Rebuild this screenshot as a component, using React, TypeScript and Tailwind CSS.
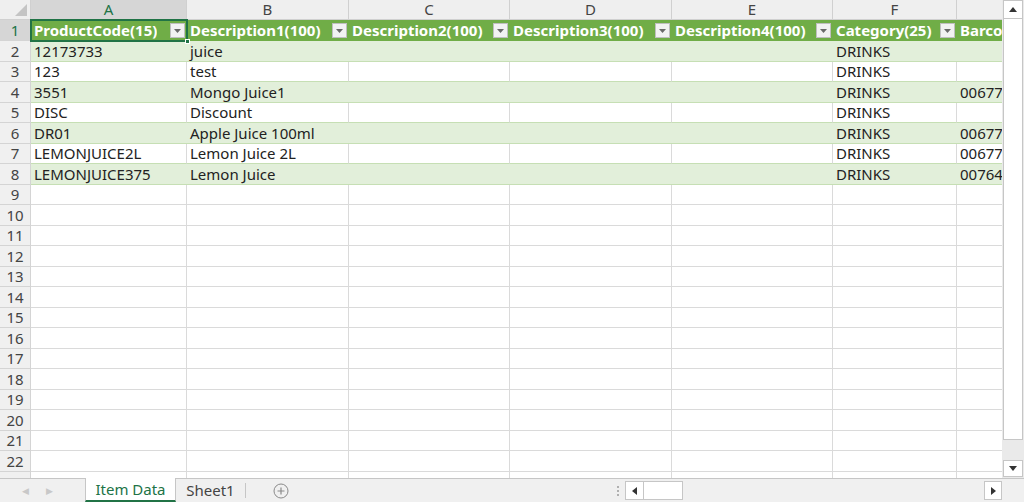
import React from "react";

const COLS = [
  { key: "A", w: 156 },
  { key: "B", w: 162 },
  { key: "C", w: 161 },
  { key: "D", w: 162 },
  { key: "E", w: 161 },
  { key: "F", w: 124 },
  { key: "G", w: 120 },
];

const HEAD = [
  "ProductCode(15)",
  "Description1(100)",
  "Description2(100)",
  "Description3(100)",
  "Description4(100)",
  "Category(25)",
  "Barcode(50)",
];

const DATA = [
  ["12173733", "juice", "", "", "", "DRINKS", ""],
  ["123", "test", "", "", "", "DRINKS", ""],
  ["3551", "Mongo Juice1", "", "", "", "DRINKS", "0067700012"],
  ["DISC", "Discount", "", "", "", "DRINKS", ""],
  ["DR01", "Apple Juice 100ml", "", "", "", "DRINKS", "0067700034"],
  ["LEMONJUICE2L", "Lemon Juice 2L", "", "", "", "DRINKS", "0067700056"],
  ["LEMONJUICE375", "Lemon Juice", "", "", "", "DRINKS", "0076400078"],
];

const font = "font-['Noto_Sans','Liberation_Sans',sans-serif]";

function FilterBtn() {
  return (
    <span className="ml-auto mr-[2px] flex h-[15px] w-[15px] shrink-0 items-center justify-center border border-[#bfbfbf] bg-[#f2f2f2]">
      <svg width="7" height="4" viewBox="0 0 7 4">
        <path d="M0 0h7L3.5 4z" fill="#6a6a6a" />
      </svg>
    </span>
  );
}

function RowHead({ n, sel }: { n: number; sel?: boolean }) {
  return (
    <div
      className={`flex w-[31px] shrink-0 items-center justify-center border-r border-b border-[#d4d4d4] text-[15px] ${
        sel ? "bg-[#d6d6d6] text-[#217346]" : "bg-[#f0f0f0] text-[#444]"
      }`}
    >
      {n}
    </div>
  );
}

export default function App() {
  const empty = Array.from({ length: 14 }, (_, i) => i + 9);
  return (
    <div className={`flex h-[502px] w-[1024px] flex-col overflow-hidden bg-white ${font}`}>
      <div className="flex h-[478px]">
        {/* sheet */}
        <div className="flex w-[1002px] flex-col overflow-hidden">
          {/* column letters */}
          <div className="flex h-[20px] shrink-0">
            <div className="relative w-[31px] shrink-0 border-r border-b border-[#d0d0d0] bg-[#efefef]">
              <svg className="absolute right-[3px] bottom-[3px]" width="12" height="12" viewBox="0 0 12 12">
                <path d="M12 0V12H0z" fill="#c4c4c4" />
              </svg>
            </div>
            {COLS.map((c, i) => (
              <div
                key={c.key}
                style={{ width: c.w }}
                className={`flex shrink-0 items-center justify-center border-r border-b text-[15px] ${
                  i === 0
                    ? "border-[#d0d0d0] border-b-[#217346] bg-[#d6d6d6] text-[#217346]"
                    : "border-[#d0d0d0] bg-[#efefef] text-[#444]"
                }`}
              >
                {c.key}
              </div>
            ))}
          </div>

          {/* header row */}
          <div className="flex h-[21px] shrink-0">
            <RowHead n={1} sel />
            {COLS.map((c, i) => (
              <div
                key={c.key}
                style={{ width: c.w }}
                className={`relative flex shrink-0 items-center overflow-visible bg-[#70ad47] pl-[3px] text-[15px] font-bold whitespace-nowrap text-white ${
                  i === 0 ? "z-10 outline-2 -outline-offset-1 outline-[#217346]" : ""
                }`}
              >
                <span className="overflow-hidden">{HEAD[i]}</span>
                {i < 6 && <FilterBtn />}
                {i === 0 && (
                  <span className="absolute right-[-3px] bottom-[-3px] h-[5px] w-[5px] border border-white bg-[#217346]" />
                )}
              </div>
            ))}
          </div>

          {/* data rows */}
          {DATA.map((r, ri) => {
            const band = ri % 2 === 0;
            return (
              <div key={ri} className="flex h-[20.5px] shrink-0">
                <RowHead n={ri + 2} />
                {COLS.map((c, ci) => (
                  <div
                    key={c.key}
                    style={{ width: c.w }}
                    className={`flex shrink-0 items-center overflow-hidden border-b border-[#c6dfb4] pl-[3px] text-[15px] whitespace-nowrap text-[#222] ${
                      band ? "bg-[#e2efda]" : "border-r border-r-[#dadada] bg-white"
                    }`}
                  >
                    {r[ci]}
                  </div>
                ))}
              </div>
            );
          })}

          {/* empty rows */}
          {empty.map((n) => (
            <div key={n} className="flex h-[20.5px] shrink-0">
              <RowHead n={n} />
              {COLS.map((c) => (
                <div
                  key={c.key}
                  style={{ width: c.w }}
                  className="shrink-0 border-r border-b border-[#dadada] bg-white"
                />
              ))}
            </div>
          ))}
          <div className="flex h-[10px] shrink-0">
            <div className="w-[31px] shrink-0 border-r border-[#d4d4d4] bg-[#f0f0f0]" />
            {COLS.map((c) => (
              <div key={c.key} style={{ width: c.w }} className="shrink-0 border-r border-[#dadada]" />
            ))}
          </div>
        </div>

        {/* vertical scrollbar */}
        <div className="flex w-[22px] flex-col bg-[#eaeaea] pl-[1px]">
          <div className="flex h-[19px] w-[20px] items-center justify-center border border-[#c6c6c6] bg-white">
            <svg width="8" height="5" viewBox="0 0 8 5">
              <path d="M0 5L4 0l4 5z" fill="#333" />
            </svg>
          </div>
          <div className="h-[421px] w-[20px] border border-t-0 border-[#c6c6c6] bg-white" />
          <div className="flex-1" />
          <div className="mb-[1px] flex h-[17px] w-[20px] items-center justify-center border border-[#c6c6c6] bg-white">
            <svg width="8" height="5" viewBox="0 0 8 5">
              <path d="M0 0h8L4 5z" fill="#333" />
            </svg>
          </div>
        </div>
      </div>

      {/* tab bar */}
      <div className="flex h-[24px] items-stretch border-t border-[#c6c6c6] bg-[#f0f0f0]">
        <div className="flex w-[85px] shrink-0 items-center gap-[17px] pl-[22px] text-[9px] text-[#c8c8c8]">
          <span>◀</span>
          <span>▶</span>
        </div>
        <div className="-mt-px flex w-[91px] shrink-0 items-center justify-center border-x border-b-2 border-[#c6c6c6] border-b-[#217346] bg-white text-[15px] text-[#217346]">
          Item Data
        </div>
        <div className="flex w-[69px] shrink-0 items-center justify-center text-[15px] text-[#444]">
          Sheet1
        </div>
        <div className="my-[4px] w-px bg-[#c6c6c6]" />
        <div className="flex w-[70px] shrink-0 items-center justify-center">
          <svg width="16" height="16" viewBox="0 0 16 16">
            <circle cx="8" cy="8" r="7" fill="none" stroke="#8a8a8a" strokeWidth="1" />
            <path d="M8 4.5v7M4.5 8h7" stroke="#8a8a8a" strokeWidth="1.2" />
          </svg>
        </div>
        <div className="flex-1" />
        <div className="flex w-[14px] shrink-0 flex-col items-center justify-center gap-[2px]">
          <span className="h-[2px] w-[2px] bg-[#b0b0b0]" />
          <span className="h-[2px] w-[2px] bg-[#b0b0b0]" />
          <span className="h-[2px] w-[2px] bg-[#b0b0b0]" />
        </div>
        {/* horizontal scrollbar */}
        <div className="flex w-[377px] shrink-0 items-center py-[2px]">
          <div className="flex h-[19px] w-[19px] items-center justify-center border border-[#c6c6c6] bg-white">
            <svg width="5" height="8" viewBox="0 0 5 8">
              <path d="M5 0v8L0 4z" fill="#333" />
            </svg>
          </div>
          <div className="h-[19px] w-[39px] border border-l-0 border-[#c6c6c6] bg-white" />
          <div className="flex-1" />
          <div className="flex h-[19px] w-[18px] items-center justify-center border border-[#c6c6c6] bg-white">
            <svg width="5" height="8" viewBox="0 0 5 8">
              <path d="M0 0v8l5-4z" fill="#333" />
            </svg>
          </div>
        </div>
        <div className="w-[22px] shrink-0" />
      </div>
    </div>
  );
}
